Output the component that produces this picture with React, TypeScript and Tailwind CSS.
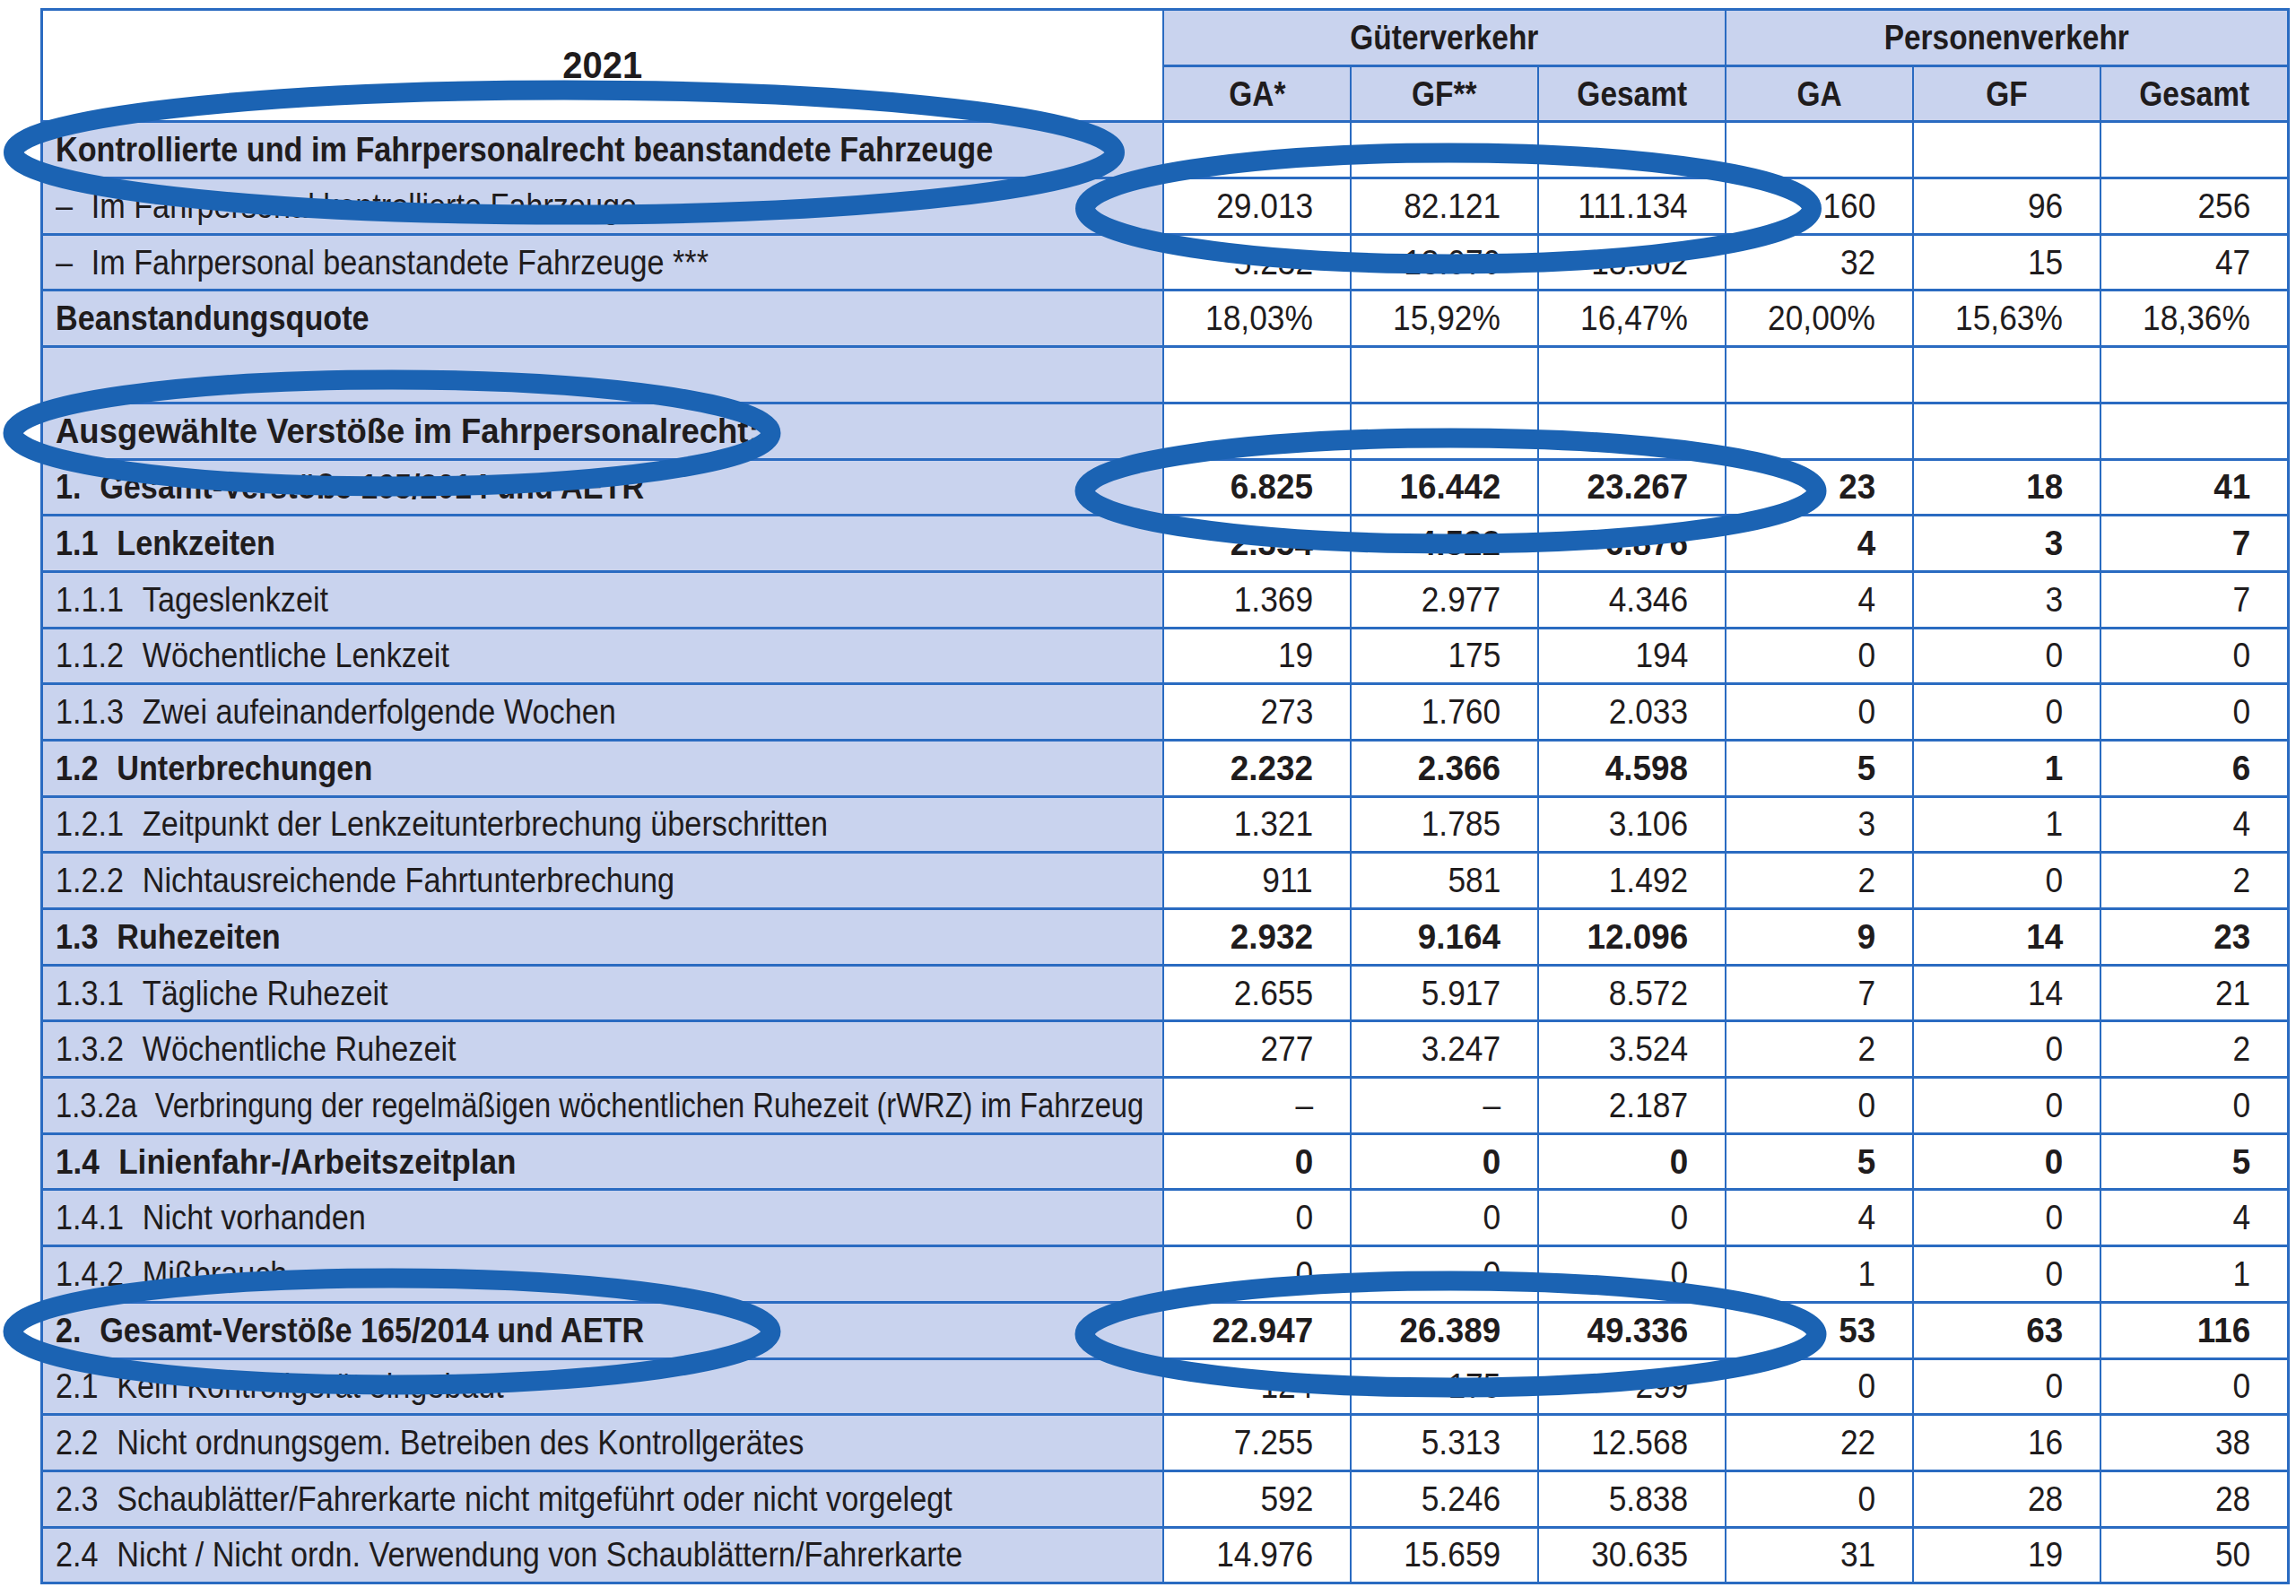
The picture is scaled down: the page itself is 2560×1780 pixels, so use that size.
import React from "react";

type Row = {
  num?: string;
  text: string;
  bold?: boolean;
  boldValues?: boolean;
  scale?: string;
  values: string[];
};

const E = ["", "", "", "", "", ""];

const rows: Row[] = [
  { text: "Kontrollierte und im Fahrpersonalrecht beanstandete Fahrzeuge", bold: true, values: E },
  { num: "–", text: "Im Fahrpersonal kontrollierte Fahrzeuge", values: ["29.013", "82.121", "111.134", "160", "96", "256"] },
  { num: "–", text: "Im Fahrpersonal beanstandete Fahrzeuge ***", values: ["5.232", "13.070", "18.302", "32", "15", "47"] },
  { text: "Beanstandungsquote", bold: true, values: ["18,03%", "15,92%", "16,47%", "20,00%", "15,63%", "18,36%"] },
  { text: "", values: E },
  { text: "Ausgewählte Verstöße im Fahrpersonalrecht:", bold: true, scale: "scale-x-[0.96]", values: E },
  { num: "1.", text: "Gesamt-Verstöße 165/2014 und AETR", bold: true, boldValues: true, values: ["6.825", "16.442", "23.267", "23", "18", "41"] },
  { num: "1.1", text: "Lenkzeiten", bold: true, boldValues: true, values: ["2.354", "4.522", "6.876", "4", "3", "7"] },
  { num: "1.1.1", text: "Tageslenkzeit", values: ["1.369", "2.977", "4.346", "4", "3", "7"] },
  { num: "1.1.2", text: "Wöchentliche Lenkzeit", values: ["19", "175", "194", "0", "0", "0"] },
  { num: "1.1.3", text: "Zwei aufeinanderfolgende Wochen", values: ["273", "1.760", "2.033", "0", "0", "0"] },
  { num: "1.2", text: "Unterbrechungen", bold: true, boldValues: true, values: ["2.232", "2.366", "4.598", "5", "1", "6"] },
  { num: "1.2.1", text: "Zeitpunkt der Lenkzeitunterbrechung überschritten", values: ["1.321", "1.785", "3.106", "3", "1", "4"] },
  { num: "1.2.2", text: "Nichtausreichende Fahrtunterbrechung", values: ["911", "581", "1.492", "2", "0", "2"] },
  { num: "1.3", text: "Ruhezeiten", bold: true, boldValues: true, values: ["2.932", "9.164", "12.096", "9", "14", "23"] },
  { num: "1.3.1", text: "Tägliche Ruhezeit", values: ["2.655", "5.917", "8.572", "7", "14", "21"] },
  { num: "1.3.2", text: "Wöchentliche Ruhezeit", values: ["277", "3.247", "3.524", "2", "0", "2"] },
  { num: "1.3.2a", text: "Verbringung der regelmäßigen wöchentlichen Ruhezeit (rWRZ) im Fahrzeug", scale: "scale-x-[0.86]", values: ["–", "–", "2.187", "0", "0", "0"] },
  { num: "1.4", text: "Linienfahr-/Arbeitszeitplan", bold: true, boldValues: true, scale: "scale-x-[0.925]", values: ["0", "0", "0", "5", "0", "5"] },
  { num: "1.4.1", text: "Nicht vorhanden", values: ["0", "0", "0", "4", "0", "4"] },
  { num: "1.4.2", text: "Mißbrauch", values: ["0", "0", "0", "1", "0", "1"] },
  { num: "2.", text: "Gesamt-Verstöße 165/2014 und AETR", bold: true, boldValues: true, values: ["22.947", "26.389", "49.336", "53", "63", "116"] },
  { num: "2.1", text: "Kein Kontrollgerät eingebaut", values: ["124", "175", "299", "0", "0", "0"] },
  { num: "2.2", text: "Nicht ordnungsgem. Betreiben des Kontrollgerätes", values: ["7.255", "5.313", "12.568", "22", "16", "38"] },
  { num: "2.3", text: "Schaublätter/Fahrerkarte nicht mitgeführt oder nicht vorgelegt", values: ["592", "5.246", "5.838", "0", "28", "28"] },
  { num: "2.4", text: "Nicht / Nicht ordn. Verwendung von Schaublättern/Fahrerkarte", values: ["14.976", "15.659", "30.635", "31", "19", "50"] },
];

const ellipses = [
  { cx: 629, cy: 170, rx: 614, ry: 69.5 },
  { cx: 1615, cy: 232.5, rx: 405, ry: 62 },
  { cx: 437, cy: 483, rx: 422.5, ry: 59.5 },
  { cx: 1617.5, cy: 547.5, rx: 408, ry: 59 },
  { cx: 437, cy: 1485, rx: 422.5, ry: 59.5 },
  { cx: 1617.5, cy: 1488, rx: 408, ry: 59.5 },
];

function HeadCell({ children, className = "" }: { children: React.ReactNode; className?: string }) {
  return (
    <div className={`flex items-center justify-center bg-[#c9d3ee] font-bold ${className}`}>
      <span className="inline-block origin-center scale-x-[0.88] whitespace-nowrap">{children}</span>
    </div>
  );
}

export default function App() {
  return (
    <div className="relative w-[2560px] h-[1780px] bg-white overflow-hidden font-['Liberation_Sans',Arial,sans-serif] text-[38px] leading-none text-[#1f1c1d]">
      <div className="pt-[9px] pl-[45px]">
        <div className="grid w-fit grid-cols-[1248px_repeat(6,207px)] auto-rows-[59.7px] gap-x-[2px] gap-y-[3px] border-[3px] border-[#2a6bc1] bg-[#2a6bc1]">
          {/* header */}
          <div className="row-span-2 flex items-center justify-center bg-white font-bold text-[42px]">
            <span className="inline-block origin-center scale-x-[0.95]">2021</span>
          </div>
          <HeadCell className="col-span-3">Güterverkehr</HeadCell>
          <HeadCell className="col-span-3">Personenverkehr</HeadCell>
          {["GA*", "GF**", "Gesamt", "GA", "GF", "Gesamt"].map((h, i) => (
            <HeadCell key={i}>{h}</HeadCell>
          ))}
          {rows.map((r, ri) => (
            <React.Fragment key={ri}>
              <div className={`flex items-center pl-[14px] bg-[#c9d3ee] ${r.bold ? "font-bold" : ""}`}>
                <span className={`inline-block origin-left whitespace-nowrap ${r.scale ?? "scale-x-[0.9]"}`}>
                  {r.num && <span className="mr-[23px]">{r.num}</span>}
                  {r.text}
                </span>
              </div>
              {r.values.map((v, vi) => (
                <div
                  key={vi}
                  className={`flex items-center justify-end pr-[41px] bg-white ${r.boldValues ? "font-bold" : ""}`}
                >
                  <span className={`inline-block origin-right whitespace-nowrap ${r.boldValues ? "scale-x-[0.97]" : "scale-x-[0.93]"}`}>
                    {v}
                  </span>
                </div>
              ))}
            </React.Fragment>
          ))}
        </div>
      </div>
      <svg className="absolute left-0 top-0 pointer-events-none" width="2560" height="1780" viewBox="0 0 2560 1780">
        {ellipses.map((e, i) => (
          <ellipse key={i} cx={e.cx} cy={e.cy} rx={e.rx} ry={e.ry} fill="none" stroke="#1b63b3" strokeWidth="22" />
        ))}
      </svg>
    </div>
  );
}
